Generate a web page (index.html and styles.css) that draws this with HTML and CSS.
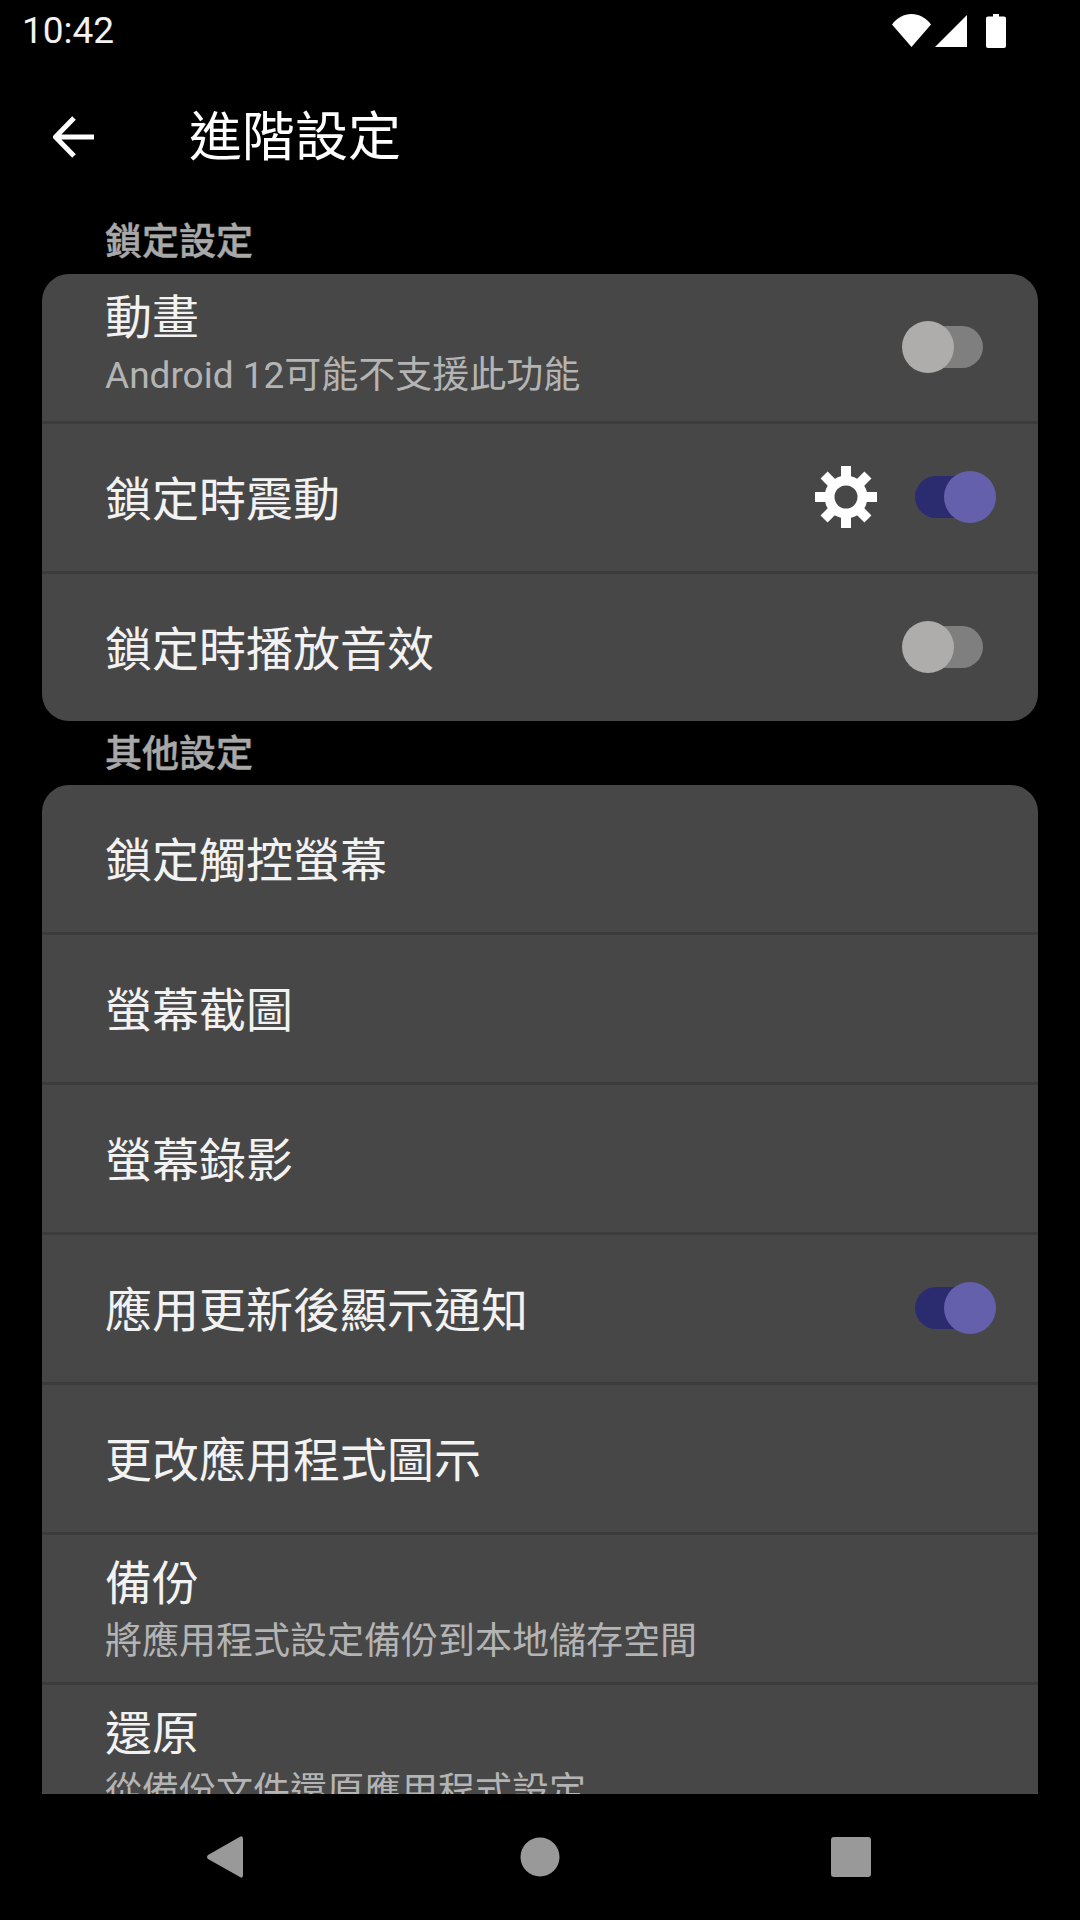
FILE: index.html
```html
<!DOCTYPE html>
<html lang="zh-Hant">
<head>
    <meta charset="UTF-8">
    <meta name="viewport" content="width=device-width, initial-scale=1.0">
    <title>進階設定</title>
    <link rel="stylesheet" href="styles.css">
</head>
<body>
    <div class="statusBar">
        <div class="time">10:42</div>
        <div class="statusIcons">
            <svg class="wifi" width="39" height="33" viewBox="0 0 39 33"><path d="M0 10.5C5 3.8 12 0 19.5 0S34 3.8 39 10.5L19.5 33Z" fill="#fff"/></svg>
            <svg class="signal" width="32" height="32" viewBox="0 0 32 32"><path d="M32 0V32H0Z" fill="#fff"/></svg>
            <svg class="battery" width="20" height="34" viewBox="0 0 20 34"><path d="M7 0H13V2.5H18A2 2 0 0 1 20 4.500V32A2 2 0 0 1 18 34H2A2 2 0 0 1 0 32V4.500A2 2 0 0 1 2 2.500H7Z" fill="#fff"/></svg>
        </div>
    </div>

    <div class="toolbar">
        <svg class="backArrow" width="42" height="42" viewBox="0 0 42 42"><path d="M41 21H4M21 2 2.500 21 21 40" fill="none" stroke="#fff" stroke-width="5"/></svg>
        <div class="toolbarTitle">進階設定</div>
    </div>

    <div class="content">
        <div class="sectionTitle">鎖定設定</div>
        <div class="card">
            <div class="row">
                <div class="rowText">
                    <div class="rowTitle">動畫</div>
                    <div class="rowSub">Android 12可能不支援此功能</div>
                </div>
                <div class="switch"><div class="track"></div><div class="thumb"></div></div>
            </div>
            <div class="row">
                <div class="rowText">
                    <div class="rowTitle">鎖定時震動</div>
                </div>
                <svg class="gear" width="62" height="62" viewBox="0 0 62 62">
                    <circle cx="31" cy="31" r="21.500" fill="#fff"/>
                    <g fill="#fff">
                        <rect x="26" y="0" width="10" height="62"/>
                        <rect x="26" y="0" width="10" height="62" transform="rotate(45 31 31)"/>
                        <rect x="26" y="0" width="10" height="62" transform="rotate(90 31 31)"/>
                        <rect x="26" y="0" width="10" height="62" transform="rotate(135 31 31)"/>
                    </g>
                    <circle cx="31" cy="31" r="11.500" fill="#474747"/>
                </svg>
                <div class="switch on"><div class="track"></div><div class="thumb"></div></div>
            </div>
            <div class="row">
                <div class="rowText">
                    <div class="rowTitle">鎖定時播放音效</div>
                </div>
                <div class="switch"><div class="track"></div><div class="thumb"></div></div>
            </div>
        </div>

        <div class="sectionTitle second">其他設定</div>
        <div class="card">
            <div class="row">
                <div class="rowText"><div class="rowTitle">鎖定觸控螢幕</div></div>
            </div>
            <div class="row">
                <div class="rowText"><div class="rowTitle">螢幕截圖</div></div>
            </div>
            <div class="row">
                <div class="rowText"><div class="rowTitle">螢幕錄影</div></div>
            </div>
            <div class="row">
                <div class="rowText"><div class="rowTitle">應用更新後顯示通知</div></div>
                <div class="switch on"><div class="track"></div><div class="thumb"></div></div>
            </div>
            <div class="row">
                <div class="rowText"><div class="rowTitle">更改應用程式圖示</div></div>
            </div>
            <div class="row">
                <div class="rowText lower">
                    <div class="rowTitle">備份</div>
                    <div class="rowSub">將應用程式設定備份到本地儲存空間</div>
                </div>
            </div>
            <div class="row">
                <div class="rowText lower">
                    <div class="rowTitle">還原</div>
                    <div class="rowSub">從備份文件還原應用程式設定</div>
                </div>
            </div>
        </div>
    </div>

    <div class="navBar">
        <svg width="36" height="42" viewBox="0 0 36 42"><path d="M33 .8Q36-1 36 3V39Q36 43 33 41L1 23Q-1 21 1 19Z" fill="#999"/></svg>
        <svg class="navHome" width="40" height="40" viewBox="0 0 40 40"><circle cx="20" cy="20" r="19.500" fill="#999"/></svg>
        <svg width="40" height="40" viewBox="0 0 40 40"><rect width="40" height="40" rx="3" fill="#999"/></svg>
    </div>
</body>
</html>
```

FILE: styles.css
```css
* {
    box-sizing: border-box;
}

body {
    margin: 0;
    width: 1080px;
    height: 1920px;
    display: flex;
    flex-direction: column;
    overflow: hidden;
    background-color: #000;
    color: #fff;
    font-family: Roboto, 'Noto Sans CJK TC', sans-serif;
}

.statusBar {
    height: 65px;
    flex: none;
    display: flex;
    justify-content: space-between;
    align-items: center;
    padding: 0 74px 4px 22px;
}

.time {
    font-size: 37px;
    color: #f2f2f2;
}

.statusIcons {
    display: flex;
    align-items: center;
    gap: 4px;
}

.battery {
    margin-left: 15px;
}

.toolbar {
    height: 144px;
    flex: none;
    display: flex;
    align-items: center;
    padding-left: 53px;
}

.toolbarTitle {
    margin: 0 0 9px 94px;
    font-size: 53px;
}

.content {
    flex: 1;
    min-height: 0;
    overflow: hidden;
    padding: 0 42px;
}

.sectionTitle {
    height: 65px;
    line-height: 67px;
    padding-left: 63px;
    font-size: 37px;
    font-weight: 500;
    -webkit-text-stroke: 0.5px #a8a8a8;
    color: #a8a8a8;
}

.sectionTitle.second {
    height: 64px;
}

.card {
    border-radius: 27px;
    background-color: #474747;
    overflow: hidden;
}

.row {
    height: 150px;
    display: flex;
    align-items: center;
    padding: 0 42px 0 63px;
    border-bottom: 3px solid #3c3c3c;
}

.row:last-child {
    border-bottom: 0;
    height: 147px;
}

.rowText {
    flex: 1;
    min-width: 0;
    padding-top: 3px;
}

.rowText.lower {
    padding-top: 13px;
}

.rowTitle {
    line-height: 53px;
    font-size: 47px;
    color: #f2f2f2;
}

.rowSub {
    line-height: 63px;
    font-size: 37px;
    color: #b4b4b4;
}

.gear {
    margin: 0 25px 1px 0;
}

.switch {
    position: relative;
    width: 94px;
    height: 52px;
    margin-bottom: 1px;
    display: flex;
    align-items: center;
}

.track {
    position: absolute;
    left: 13px;
    top: 5px;
    width: 68px;
    height: 42px;
    border-radius: 21px;
    background-color: #7f7f7f;
}

.thumb {
    position: relative;
    width: 52px;
    height: 52px;
    border-radius: 50%;
    background-color: #aeadab;
}

.switch.on {
    justify-content: flex-end;
}

.switch.on .track {
    background-color: #2b2b70;
}

.switch.on .thumb {
    background-color: #6560ab;
}

.navBar {
    height: 126px;
    flex: none;
    display: flex;
    align-items: center;
    padding-left: 207px;
}

.navHome {
    margin: 0 271px 0 277px;
}
```
